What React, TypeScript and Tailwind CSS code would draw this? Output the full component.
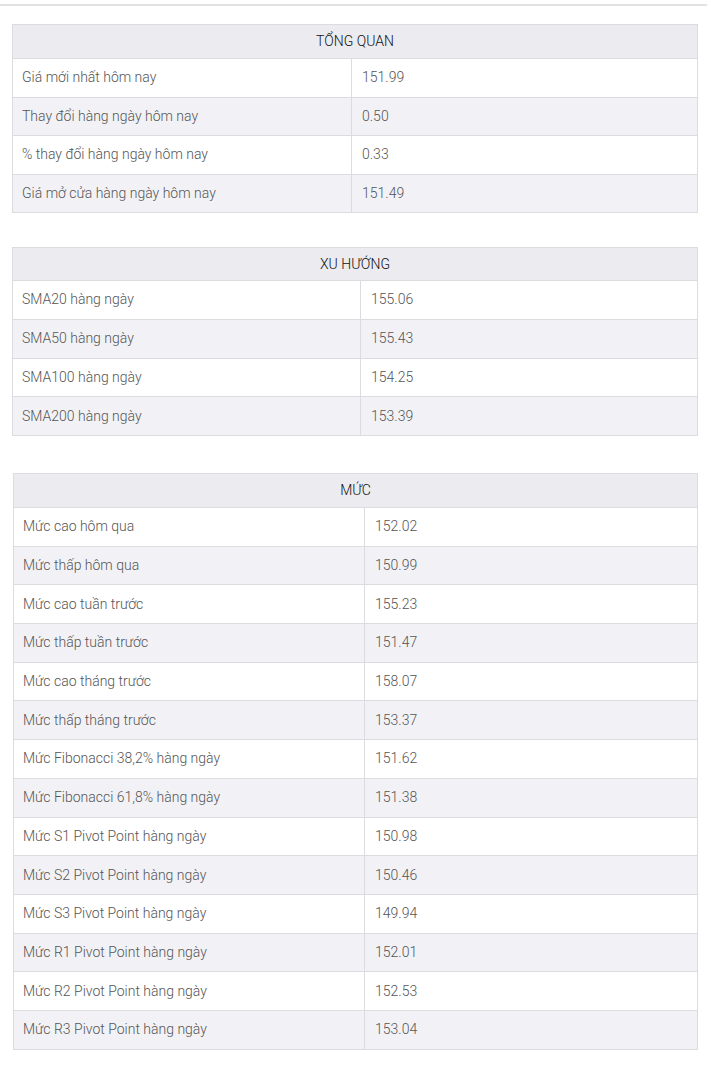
import React from "react";

type Row = [string, string];

const overview: Row[] = [
  ["Giá mới nhất hôm nay", "151.99"],
  ["Thay đổi hàng ngày hôm nay", "0.50"],
  ["% thay đổi hàng ngày hôm nay", "0.33"],
  ["Giá mở cửa hàng ngày hôm nay", "151.49"],
];

const trend: Row[] = [
  ["SMA20 hàng ngày", "155.06"],
  ["SMA50 hàng ngày", "155.43"],
  ["SMA100 hàng ngày", "154.25"],
  ["SMA200 hàng ngày", "153.39"],
];

const levels: Row[] = [
  ["Mức cao hôm qua", "152.02"],
  ["Mức thấp hôm qua", "150.99"],
  ["Mức cao tuần trước", "155.23"],
  ["Mức thấp tuần trước", "151.47"],
  ["Mức cao tháng trước", "158.07"],
  ["Mức thấp tháng trước", "153.37"],
  ["Mức Fibonacci 38,2% hàng ngày", "151.62"],
  ["Mức Fibonacci 61,8% hàng ngày", "151.38"],
  ["Mức S1 Pivot Point hàng ngày", "150.98"],
  ["Mức S2 Pivot Point hàng ngày", "150.46"],
  ["Mức S3 Pivot Point hàng ngày", "149.94"],
  ["Mức R1 Pivot Point hàng ngày", "152.01"],
  ["Mức R2 Pivot Point hàng ngày", "152.53"],
  ["Mức R3 Pivot Point hàng ngày", "153.04"],
];

function DataTable({
  title,
  rows,
  labelWidth,
  headerH,
  rowH,
}: {
  title: string;
  rows: Row[];
  labelWidth: string;
  headerH: string;
  rowH: string;
}) {
  return (
    <div className="border border-[#dcdce0]">
      <div
        className={`${headerH} flex items-center justify-center bg-[#ebebf0] text-[14px] text-[#111] font-light`}
      >
        {title}
      </div>
      {rows.map(([label, value], i) => (
        <div
          key={label}
          className={`flex ${rowH} border-t border-[#dcdce0] ${
            i % 2 === 1 ? "bg-[#f2f2f6]" : "bg-white"
          }`}
        >
          <div
            className={`${labelWidth} flex items-center pl-[9px] border-r border-[#dcdce0] text-[14px] text-[#555] font-light`}
          >
            {label}
          </div>
          <div className="flex-1 flex items-center pl-[10px] text-[14px] text-[#555] font-light">
            {value}
          </div>
        </div>
      ))}
    </div>
  );
}

export default function App() {
  return (
    <div
      className="w-[715px] min-h-[1066px] bg-white"
      style={{ fontFamily: "Roboto, 'Noto Sans', sans-serif" }}
    >
      <div className="pt-[4px]">
        <div className="h-[2px] w-[707px] bg-[#e2e2e2]" />
      </div>
      <div className="pl-[12px] pr-[17px] pt-[18px]">
        <DataTable
          title="TỔNG QUAN"
          rows={overview}
          labelWidth="w-[339px]"
          headerH="h-[33px]"
          rowH="h-[38.5px]"
        />
        <div className="mt-[34px]">
          <DataTable
            title="XU HƯỚNG"
            rows={trend}
            labelWidth="w-[348px]"
            headerH="h-[32px]"
            rowH="h-[38.75px]"
          />
        </div>
        <div className="mt-[37px] pl-[1px]">
          <DataTable
            title="MỨC"
            rows={levels}
            labelWidth="w-[351px]"
            headerH="h-[33px]"
            rowH="h-[38.7px]"
          />
        </div>
      </div>
    </div>
  );
}
